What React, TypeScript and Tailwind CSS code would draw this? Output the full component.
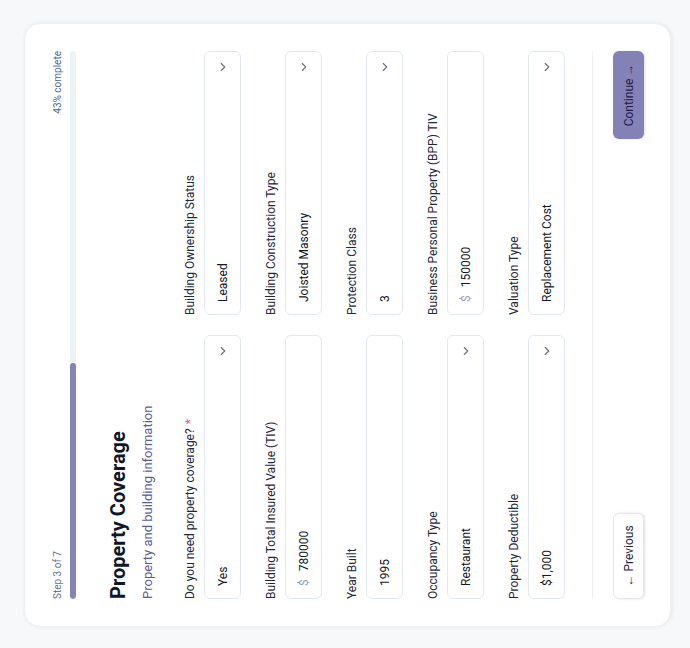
import { ChevronDown } from "lucide-react";

type Field = {
  label: string;
  value: string;
  kind: "select" | "money" | "text";
  required?: boolean;
};

const fields: Field[] = [
  { label: "Do you need property coverage?", value: "Yes", kind: "select", required: true },
  { label: "Building Ownership Status", value: "Leased", kind: "select" },
  { label: "Building Total Insured Value (TIV)", value: "780000", kind: "money" },
  { label: "Building Construction Type", value: "Joisted Masonry", kind: "select" },
  { label: "Year Built", value: "1995", kind: "text" },
  { label: "Protection Class", value: "3", kind: "select" },
  { label: "Occupancy Type", value: "Restaurant", kind: "select" },
  { label: "Business Personal Property (BPP) TIV", value: "150000", kind: "money" },
  { label: "Property Deductible", value: "$1,000", kind: "select" },
  { label: "Valuation Type", value: "Replacement Cost", kind: "select" },
];

const FieldBox = ({ field }: { field: Field }) => {
  return (
    <div className="flex flex-col">
      <label className="text-xs leading-4 text-[#1e293b] mb-1.5">
        {field.label}
        {field.required && <span className="text-[#ec4899] ml-1">*</span>}
      </label>
      <div className="h-[37px] border border-[#e2e8f0] rounded-md bg-white flex items-center pl-3 pr-2 text-xs text-[#111827]">
        {field.kind === "money" && (
          <span className="text-[#94a3b8] mr-2">$</span>
        )}
        <span className="flex-1">{field.value}</span>
        {field.kind === "select" && (
          <ChevronDown size={14} strokeWidth={2} className="text-[#6b7280]" />
        )}
      </div>
    </div>
  );
};

const App = () => {
  return (
    <div className="w-[690px] h-[648px] overflow-hidden bg-[#f7f8fa] font-['Roboto',sans-serif]">
      <div className="w-[648px] h-[690px] origin-top-left -rotate-90 translate-y-[648px] pl-[21px] pt-6">
        <div className="w-[604px] h-[647px] bg-white rounded-2xl shadow-[0_1px_4px_rgba(15,23,42,0.08)] border border-[#eef0f4] px-[27px] pt-[26px] pb-[26px] flex flex-col">
          {/* progress */}
          <div className="flex justify-between text-[10px] leading-[14px]">
            <span className="text-[#64748b]">Step 3 of 7</span>
            <span className="text-[#4a6a9c]">43% complete</span>
          </div>
          <div className="mt-[5px] h-1.5 rounded-full bg-[#eef2f7] overflow-hidden">
            <div className="h-full w-[43%] rounded-full bg-[#8683b8]"></div>
          </div>

          <h1 className="mt-7 text-xl leading-7 font-bold text-[#0f172a]">
            Property Coverage
          </h1>
          <p className="mt-1.5 text-[13px] leading-5 text-[#5b5b9b]">
            Property and building information
          </p>

          <div className="mt-6 grid grid-cols-2 gap-x-5 gap-y-[22px]">
            {fields.map((f, idx) => (
              <FieldBox key={idx} field={f} />
            ))}
          </div>

          <div className="mt-auto border-t border-[#eef0f4] pt-5 flex justify-between">
            <button
              type="button"
              className="h-[31px] w-[86px] rounded-md border border-[#e5e7eb] bg-white shadow-sm text-xs text-[#1e293b]"
            >
              ← Previous
            </button>
            <button
              type="button"
              className="h-[31px] w-[88px] rounded-md bg-[#8481b6] shadow-sm text-xs text-[#1e1b4b]"
            >
              Continue →
            </button>
          </div>
        </div>
      </div>
    </div>
  );
};

export default App;
